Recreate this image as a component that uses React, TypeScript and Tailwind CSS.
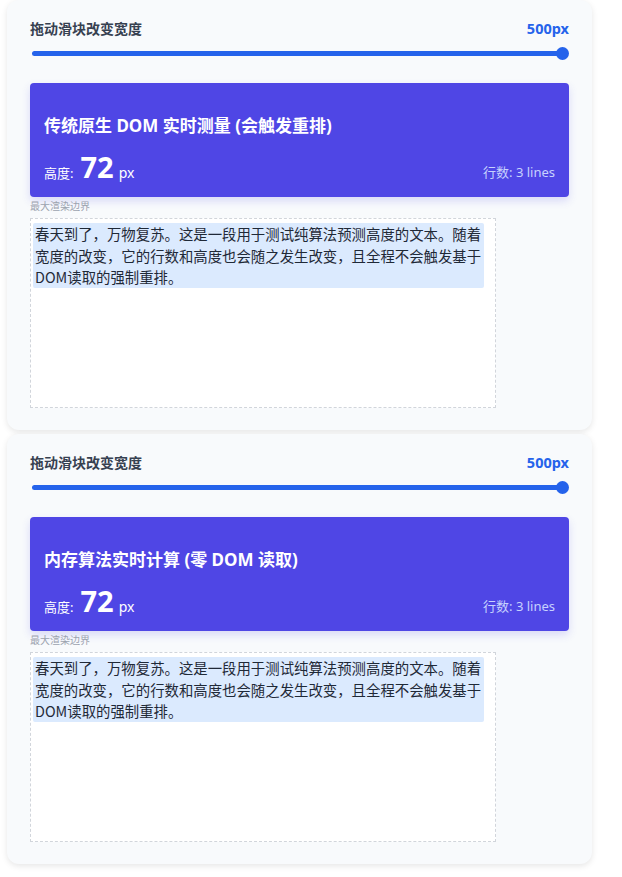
const TEXT =
  '春天到了，万物复苏。这是一段用于测试纯算法预测高度的文本。随着宽度的改变，它的行数和高度也会随之发生改变，且全程不会触发基于DOM读取的强制重排。'

function DemoCard({ title }: { title: string }) {
  return (
    <div className="w-[585px] ml-[7px] rounded-xl bg-[#f8fafc] shadow-[0_2px_6px_rgba(0,0,0,0.1)] px-[23px] pt-[19px] pb-[22px]">
      {/* slider row */}
      <div className="flex items-center justify-between h-[19px]">
        <span className="text-[14px] font-bold text-[#374151]">拖动滑块改变宽度</span>
        <span className="text-[14.5px] font-bold text-[#2563eb]">500px</span>
      </div>
      <div className="relative mt-[9px] h-[13px] flex items-center pl-[2px] pr-[1px]">
        <div className="h-[5px] w-full rounded-full bg-[#2563eb]" />
        <div className="absolute right-0 top-0 h-[13px] w-[13px] rounded-full bg-[#2563eb]" />
      </div>

      {/* result panel */}
      <div className="mt-[23px] h-[114px] rounded-[4px] bg-[#4f46e5] px-[14px] pb-[14px] flex flex-col justify-end shadow-[0_4px_8px_rgba(79,70,229,0.18)]">
        <div className="text-[17px] font-bold text-white leading-[24px]">{title}</div>
        <div className="mt-[14px] flex items-end justify-between">
          <div className="flex items-baseline text-white">
            <span className="text-[13px]">高度:</span>
            <span className="ml-[7px] text-[29px] font-bold leading-[30px]">72</span>
            <span className="ml-[5px] text-[14px]">px</span>
          </div>
          <span className="text-[13px] text-[#c7d2fe] mb-[1px]">行数: 3 lines</span>
        </div>
      </div>

      <div className="mt-[2px] text-[10px] leading-[14px] text-[#9ca3af]">最大渲染边界</div>

      {/* bounding box */}
      <div className="mt-[5px] h-[190px] w-[466px] border border-dashed border-[#d1d5db] bg-white pl-[2px] pt-[4px]">
        <div
          className="w-[451px] rounded-[2px] bg-[#dbeafe] pl-[2px] text-[14.4px] leading-[21.6px] text-[#1f2937]"
          style={{ fontFamily: '"Noto Sans CJK SC", "Noto Sans", sans-serif' }}
        >
          {TEXT}
        </div>
      </div>
    </div>
  )
}

export default function App() {
  return (
    <div
      className="min-h-[877px] bg-white pb-[13px]"
      style={{ fontFamily: '"Noto Sans", "Noto Sans CJK SC", sans-serif' }}
    >
      <div className="flex flex-col gap-[4px]">
        <DemoCard title="传统原生 DOM 实时测量 (会触发重排)" />
        <DemoCard title="内存算法实时计算 (零 DOM 读取)" />
      </div>
    </div>
  )
}
